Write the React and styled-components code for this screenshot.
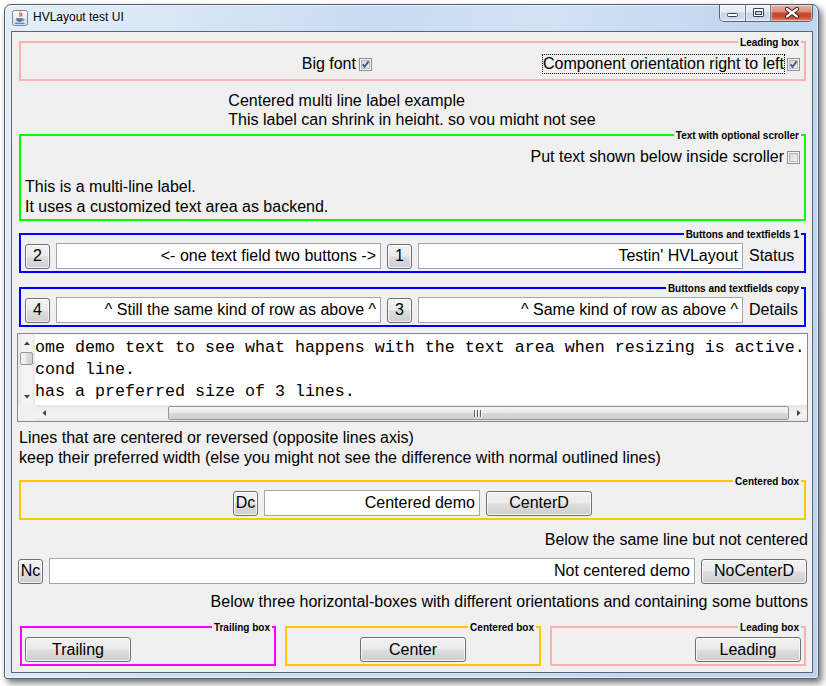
import React from "react";
import styled, { createGlobalStyle } from "styled-components";

const Global = createGlobalStyle`
  html, body { margin: 0; padding: 0; background: #ffffff; }
  body { font-family: "Liberation Sans", Arial, sans-serif; font-size: 16px; color: #000; }
  * { box-sizing: border-box; }
`;

const FONT = `"Liberation Sans", Arial, sans-serif`;

const Desktop = styled.div`
  width: 826px;
  height: 686px;
  padding: 4px 0 0 4px;
  overflow: hidden;
  background: #ffffff;
`;

const Window = styled.div`
  width: 815px;
  height: 675px;
  border: 1px solid #4e5d70;
  border-radius: 7px 7px 3px 3px;
  background: linear-gradient(100deg, #e4eef9 0%, #d8e6f6 18%, #c9dcf2 40%, #d2e2f5 58%, #c3d8f0 78%, #bcd3ee 100%);
  box-shadow: 3px 4px 7px rgba(0, 0, 0, 0.55), inset 0 0 0 1px rgba(255, 255, 255, 0.6);
  display: flex;
  flex-direction: column;
`;

const TitleBar = styled.div`
  height: 26px;
  flex: 0 0 26px;
  display: flex;
  align-items: flex-start;
  padding-left: 7px;
`;

const AppIcon = styled.svg`
  margin-top: 5px;
  flex: 0 0 16px;
`;

const TitleText = styled.span`
  margin: 5px 0 0 5px;
  font: 12px/14px ${FONT};
  color: #000;
  flex: 1;
  text-shadow: 0 0 6px rgba(255, 255, 255, 0.9);
`;

const CaptionGroup = styled.div`
  display: flex;
  height: 17px;
  margin-right: 5px;
  border: 1px solid #56647a;
  border-top: none;
  border-radius: 0 0 5px 5px;
  overflow: hidden;
`;

const CaptionBtn = styled.div`
  width: ${(p) => p.$w}px;
  height: 16px;
  border-left: ${(p) => (p.$first ? "none" : "1px solid #6b7a8f")};
  background: ${(p) =>
    p.$close
      ? "linear-gradient(#eab3a6 0%, #df907f 40%, #c9472f 52%, #c94b33 75%, #e08a70 100%)"
      : "linear-gradient(#f1f5fa 0%, #e2eaf4 42%, #c9d7e8 52%, #cbd9ea 78%, #dbe6f3 100%)"};
  box-shadow: inset 0 0 0 1px rgba(255, 255, 255, 0.45);
`;

const FrameBody = styled.div`
  flex: 1;
  display: flex;
  padding: 0 5px 5px 6px;
`;

const Client = styled.div`
  flex: 1;
  border: 1px solid #5a6573;
  background: #f0f0f0;
  display: flex;
  flex-direction: column;
  font: 16px ${FONT};
  color: #000;
`;

const TBox = styled.div`
  position: relative;
  height: ${(p) => p.$h || 40}px;
  flex: 0 0 ${(p) => p.$h || 40}px;
  margin: ${(p) => p.$m || "0 6px 0 7px"};
  border: 2px solid ${(p) => p.$c};
  padding: ${(p) => p.$pad || "8px 4px 2px 4px"};
  display: flex;
  flex-direction: ${(p) => (p.$col ? "column" : "row")};
  align-items: ${(p) => (p.$col ? "stretch" : "center")};
  justify-content: ${(p) => p.$justify || "flex-start"};
  gap: ${(p) => (p.$gap != null ? p.$gap : 6)}px;
`;

const Legend = styled.span`
  position: absolute;
  top: -5px;
  right: ${(p) => (p.$r != null ? p.$r : 3)}px;
  padding: 0 2px;
  background: #f0f0f0;
  font: bold 10px/10px ${FONT};
  color: #000;
  white-space: nowrap;
`;

const CheckItem = styled.span`
  display: inline-flex;
  align-items: center;
  gap: 2px;
  height: 20px;
`;

const CheckText = styled.span`
  border: 1px dotted ${(p) => (p.$focus ? "#000" : "transparent")};
  line-height: 18px;
  white-space: nowrap;
`;

const CenterLabel = styled.div`
  align-self: center;
  margin-top: 9px;
  padding-top: 1px;
  height: 35px;
  flex: 0 0 35px;
  overflow: hidden;
  line-height: 19px;
  white-space: nowrap;
`;

const TopRow = styled.div`
  display: flex;
  justify-content: flex-end;
  height: 20px;
`;

const MultiLines = styled.div`
  margin-top: 10px;
  line-height: 20px;
  white-space: nowrap;
`;

const Btn = styled.div`
  flex: 0 0 ${(p) => p.$w || 25}px;
  width: ${(p) => p.$w || 25}px;
  height: 25px;
  border: 1px solid #707070;
  border-radius: 3px;
  background: linear-gradient(#f2f2f2 0%, #ebebeb 48%, #dddddd 52%, #cfcfcf 100%);
  box-shadow: inset 0 0 0 1px rgba(255, 255, 255, 0.75);
  display: flex;
  align-items: center;
  justify-content: center;
  line-height: 20px;
  white-space: nowrap;
`;

const Field = styled.div`
  flex: ${(p) => (p.$w ? `0 0 ${p.$w}px` : "1 1 0")};
  min-width: 0;
  height: 26px;
  border: 1px solid #a6a6a6;
  background: #ffffff;
  line-height: 24px;
  text-align: right;
  padding: 0 4px;
  white-space: nowrap;
  overflow: hidden;
`;

const SideLabel = styled.span`
  flex: 0 0 51px;
  line-height: 26px;
  white-space: nowrap;
`;

const ScrollPane = styled.div`
  margin: 6px 4px 0 5px;
  height: 89px;
  flex: 0 0 89px;
  border: 1px solid #828790;
  background: #ffffff;
  display: grid;
  grid-template-columns: 17px 1fr;
  grid-template-rows: 1fr 16px;
`;

const VBar = styled.div`
  grid-column: 1;
  grid-row: 1;
  display: flex;
  flex-direction: column;
  background: linear-gradient(to right, #e6e6e6 0%, #f2f2f2 25%, #f4f4f4 75%, #e9e9e9 100%);
`;

const HBar = styled.div`
  grid-column: 2;
  grid-row: 2;
  display: flex;
  background: linear-gradient(#e3e3e3 0%, #efefef 25%, #f2f2f2 75%, #e6e6e6 100%);
`;

const Corner = styled.div`
  grid-column: 1;
  grid-row: 2;
  background: #f0f0f0;
`;

const ArrowCell = styled.div`
  flex: 0 0 17px;
  height: ${(p) => (p.$h ? "16px" : "17px")};
  width: 17px;
  display: flex;
  align-items: center;
  justify-content: center;
`;

const VTrack = styled.div`
  flex: 1;
  padding: 1px 2px 0 2px;
`;

const VThumb = styled.div`
  height: 13px;
  border: 1px solid #979797;
  border-radius: 2px;
  background: linear-gradient(to right, #f5f5f5 0%, #e9e9e9 48%, #d9d9d9 52%, #d2d2d2 100%);
`;

const HThumb = styled.div`
  flex: 1;
  margin: 1px 1px 1px 116px;
  border: 1px solid #979797;
  border-radius: 2px;
  background: linear-gradient(#f5f5f5 0%, #e9e9e9 48%, #d9d9d9 52%, #d0d0d0 100%);
  display: flex;
  align-items: center;
  justify-content: center;
`;

const TextView = styled.div`
  grid-column: 2;
  grid-row: 1;
  overflow: hidden;
  padding-top: 3px;
  font: 16.67px/22px "Liberation Mono", "Courier New", monospace;
  white-space: pre;
  color: #000;
`;

const PlainLines = styled.div`
  margin-top: 6px;
  padding-left: 7px;
  line-height: 20px;
  white-space: nowrap;
`;

const RightText = styled.div`
  margin-top: ${(p) => p.$mt}px;
  padding-right: 4px;
  text-align: right;
  line-height: 20px;
  white-space: nowrap;
`;

const PlainRow = styled.div`
  margin-top: 8px;
  height: 26px;
  flex: 0 0 26px;
  padding: 0 5px 0 6px;
  display: flex;
  align-items: center;
  gap: 6px;
`;

const BoxGrid = styled.div`
  margin: 14px 0 0 8px;
  display: grid;
  grid-template-columns: repeat(3, 256px);
  column-gap: 9px;
`;

function CheckBox({ checked }) {
  return (
    <svg width="13" height="13" viewBox="0 0 13 13">
      <defs>
        <linearGradient id="cbg" x1="0" y1="0" x2="1" y2="1">
          <stop offset="0" stopColor="#cfd2d6" />
          <stop offset="1" stopColor="#f6f6f6" />
        </linearGradient>
      </defs>
      <rect x="0.5" y="0.5" width="12" height="12" fill="#f4f4f4" stroke="#8e8f8f" />
      <rect x="2.5" y="2.5" width="8" height="8" fill="url(#cbg)" stroke="#b4b8bd" />
      {checked && (
        <path d="M3.6 6.4 L5.6 8.7 L9.6 3.4" fill="none" stroke="#3f5694" strokeWidth="1.8" />
      )}
    </svg>
  );
}

function Tri({ dir }) {
  const d = {
    up: "M0 4 L3 0.5 L6 4 Z",
    down: "M0 0 L3 3.5 L6 0 Z",
    left: "M4 0 L0.5 3 L4 6 Z",
    right: "M0 0 L3.5 3 L0 6 Z",
  }[dir];
  const horiz = dir === "left" || dir === "right";
  return (
    <svg width={horiz ? 4 : 6} height={horiz ? 6 : 4} viewBox={horiz ? "0 0 4 6" : "0 0 6 4"}>
      <path d={d} fill="#404040" />
    </svg>
  );
}

function Grip() {
  return (
    <svg width="9" height="7" viewBox="0 0 9 7">
      {[0, 3, 6].map((x) => (
        <g key={x}>
          <rect x={x} y="0" width="1" height="7" fill="#5e5e5e" />
          <rect x={x + 1} y="0" width="1" height="7" fill="#fafafa" />
        </g>
      ))}
    </svg>
  );
}

function JavaIcon() {
  return (
    <AppIcon width="16" height="16" viewBox="0 0 16 16">
      <defs>
        <linearGradient id="jbg" x1="0" y1="0" x2="0" y2="1">
          <stop offset="0" stopColor="#fbfcfd" />
          <stop offset="1" stopColor="#d6dbe2" />
        </linearGradient>
      </defs>
      <rect x="0.5" y="0.5" width="15" height="15" rx="2" fill="url(#jbg)" stroke="#7d8796" />
      <path d="M8.2 1.8 C6.4 3.4 9.6 4.6 7.6 6.8 M10 3 C8.8 4 10.6 5 9.4 6.4" fill="none" stroke="#e2461d" strokeWidth="1.1" />
      <path d="M4 8.2 H11 C11 10.8 9.6 12 7.5 12 C5.4 12 4 10.8 4 8.2 Z" fill="#4b78a3" />
      <path d="M11 8.8 C12.6 8.8 12.6 10.6 10.6 10.8" fill="none" stroke="#4b78a3" strokeWidth="0.9" />
      <path d="M3 13.3 H12.5" stroke="#4b78a3" strokeWidth="1.1" />
    </AppIcon>
  );
}

function Captions() {
  return (
    <CaptionGroup>
      <CaptionBtn $w={25} $first>
        <svg width="25" height="16" viewBox="0 0 25 16">
          <rect x="7.5" y="8.5" width="10" height="3" rx="1" fill="#ffffff" stroke="#39414d" />
        </svg>
      </CaptionBtn>
      <CaptionBtn $w={25}>
        <svg width="25" height="16" viewBox="0 0 25 16">
          <rect x="7.5" y="3.5" width="10" height="8" rx="0.5" fill="#ffffff" stroke="#39414d" />
          <rect x="9.5" y="6.5" width="6" height="3" fill="#c9d7e8" stroke="#39414d" />
        </svg>
      </CaptionBtn>
      <CaptionBtn $w={42} $close>
        <svg width="42" height="16" viewBox="0 0 42 16">
          <path d="M16 4 L26 11.5 M26 4 L16 11.5" stroke="#4a1a12" strokeWidth="4.2" strokeLinecap="round" />
          <path d="M16 4 L26 11.5 M26 4 L16 11.5" stroke="#ffffff" strokeWidth="2.2" strokeLinecap="round" />
        </svg>
      </CaptionBtn>
    </CaptionGroup>
  );
}

export default function App() {
  return (
    <>
      <Global />
      <Desktop>
        <Window>
          <TitleBar>
            <JavaIcon />
            <TitleText>HVLayout test UI</TitleText>
            <Captions />
          </TitleBar>
          <FrameBody>
            <Client>
              <TBox $c="#ffafaf" $m="9px 6px 0 7px" $pad="11px 4px 5px 4px" $justify="flex-end" $gap={170}>
                <Legend>Leading box</Legend>
                <CheckItem>
                  <CheckText>Big font</CheckText>
                  <CheckBox checked />
                </CheckItem>
                <CheckItem>
                  <CheckText $focus>Component orientation right to left</CheckText>
                  <CheckBox checked />
                </CheckItem>
              </TBox>

              <CenterLabel>
                Centered multi line label example
                <br />
                This label can shrink in height, so you might not see
              </CenterLabel>

              <TBox $c="#00ff00" $h={87} $m="9px 6px 0 7px" $pad="11px 4px 2px 4px" $col $gap={0}>
                <Legend>Text with optional scroller</Legend>
                <TopRow>
                  <CheckItem>
                    <CheckText>Put text shown below inside scroller</CheckText>
                    <CheckBox />
                  </CheckItem>
                </TopRow>
                <MultiLines>
                  This is a multi-line label.
                  <br />
                  It uses a customized text area as backend.
                </MultiLines>
              </TBox>

              <TBox $c="#0000ff" $m="12px 6px 0 7px">
                <Legend>Buttons and textfields 1</Legend>
                <Btn>2</Btn>
                <Field>&lt;- one text field two buttons -&gt;</Field>
                <Btn>1</Btn>
                <Field>Testin' HVLayout</Field>
                <SideLabel>Status</SideLabel>
              </TBox>

              <TBox $c="#0000ff" $m="14px 6px 0 7px">
                <Legend>Buttons and textfields copy</Legend>
                <Btn>4</Btn>
                <Field>^ Still the same kind of row as above ^</Field>
                <Btn>3</Btn>
                <Field>^ Same kind of row as above ^</Field>
                <SideLabel>Details</SideLabel>
              </TBox>

              <ScrollPane>
                <VBar>
                  <ArrowCell>
                    <Tri dir="up" />
                  </ArrowCell>
                  <VTrack>
                    <VThumb />
                  </VTrack>
                  <ArrowCell>
                    <Tri dir="down" />
                  </ArrowCell>
                </VBar>
                <TextView>
                  {"ome demo text to see what happens with the text area when resizing is active.\ncond line.\nhas a preferred size of 3 lines."}
                </TextView>
                <Corner />
                <HBar>
                  <ArrowCell $h>
                    <Tri dir="left" />
                  </ArrowCell>
                  <HThumb>
                    <Grip />
                  </HThumb>
                  <ArrowCell $h>
                    <Tri dir="right" />
                  </ArrowCell>
                </HBar>
              </ScrollPane>

              <PlainLines>
                Lines that are centered or reversed (opposite lines axis)
                <br />
                keep their preferred width (else you might not see the difference with normal outlined lines)
              </PlainLines>

              <TBox $c="#ffc800" $m="12px 6px 0 7px" $justify="center">
                <Legend>Centered box</Legend>
                <Btn>Dc</Btn>
                <Field $w={216}>Centered demo</Field>
                <Btn $w={106}>CenterD</Btn>
              </TBox>

              <RightText $mt={10}>Below the same line but not centered</RightText>

              <PlainRow>
                <Btn>Nc</Btn>
                <Field>Not centered demo</Field>
                <Btn $w={106}>NoCenterD</Btn>
              </PlainRow>

              <RightText $mt={8}>
                Below three horizontal-boxes with different orientations and containing some buttons
              </RightText>

              <BoxGrid>
                <TBox $c="#ff00ff" $m="0" $pad="9px 3px 2px 3px" $justify="flex-start">
                  <Legend $r={2}>Trailing box</Legend>
                  <Btn $w={106}>Trailing</Btn>
                </TBox>
                <TBox $c="#ffc800" $m="0" $pad="9px 3px 2px 3px" $justify="center">
                  <Legend>Centered box</Legend>
                  <Btn $w={106}>Center</Btn>
                </TBox>
                <TBox $c="#ffafaf" $m="0" $pad="9px 3px 2px 3px" $justify="flex-end">
                  <Legend>Leading box</Legend>
                  <Btn $w={106}>Leading</Btn>
                </TBox>
              </BoxGrid>
            </Client>
          </FrameBody>
        </Window>
      </Desktop>
    </>
  );
}
